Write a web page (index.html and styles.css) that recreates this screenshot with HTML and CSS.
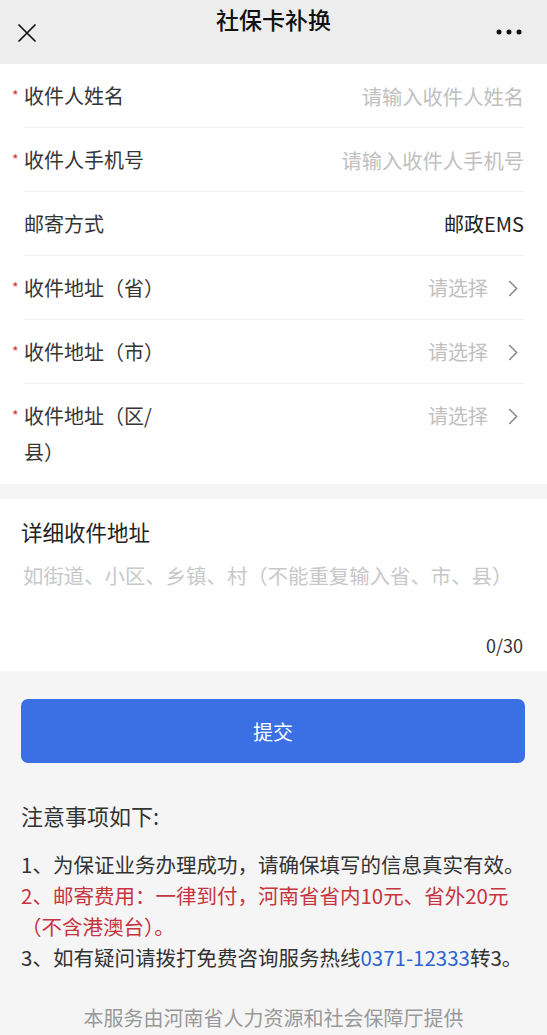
FILE: index.html
```html
<!DOCTYPE html>
<html lang="zh-CN">
<head>
    <meta charset="UTF-8">
    <meta name="viewport" content="width=device-width, initial-scale=1.0">
    <title>社保卡补换</title>
    <link rel="stylesheet" href="styles.css">
</head>
<body>
    <header class="topbar">
        <button class="topbar-btn close-btn" aria-label="关闭">
            <svg width="20" height="20" viewBox="0 0 20 20"><path d="M1.5 1.5 L18.5 18.5 M18.5 1.5 L1.5 18.5" stroke="#111" stroke-width="1.7" fill="none"/></svg>
        </button>
        <h1 class="topbar-title">社保卡补换</h1>
        <button class="topbar-btn more-btn" aria-label="更多">
            <svg width="26" height="6" viewBox="0 0 26 6"><circle cx="3" cy="3" r="2.5" fill="#111"/><circle cx="13" cy="3" r="2.5" fill="#111"/><circle cx="23" cy="3" r="2.5" fill="#111"/></svg>
        </button>
    </header>

    <section class="form-card">
        <div class="form-row">
            <label class="form-label required">收件人姓名</label>
            <input class="form-input" type="text" placeholder="请输入收件人姓名">
        </div>
        <div class="form-row">
            <label class="form-label required">收件人手机号</label>
            <input class="form-input" type="tel" placeholder="请输入收件人手机号">
        </div>
        <div class="form-row">
            <label class="form-label">邮寄方式</label>
            <span class="form-value">邮政EMS</span>
        </div>
        <div class="form-row">
            <label class="form-label required">收件地址（省）</label>
            <span class="form-select">请选择<svg class="chevron" width="10" height="17" viewBox="0 0 10 17"><path d="M1.2 1 L8.6 8.5 L1.2 16" stroke="#888" stroke-width="1.5" fill="none"/></svg></span>
        </div>
        <div class="form-row">
            <label class="form-label required">收件地址（市）</label>
            <span class="form-select">请选择<svg class="chevron" width="10" height="17" viewBox="0 0 10 17"><path d="M1.2 1 L8.6 8.5 L1.2 16" stroke="#888" stroke-width="1.5" fill="none"/></svg></span>
        </div>
        <div class="form-row">
            <label class="form-label required">收件地址（区/县）</label>
            <span class="form-select">请选择<svg class="chevron" width="10" height="17" viewBox="0 0 10 17"><path d="M1.2 1 L8.6 8.5 L1.2 16" stroke="#888" stroke-width="1.5" fill="none"/></svg></span>
        </div>
    </section>

    <section class="detail-card">
        <div class="detail-title">详细收件地址</div>
        <textarea class="detail-input" maxlength="30" placeholder="如街道、小区、乡镇、村（不能重复输入省、市、县）"></textarea>
        <div class="detail-count">0/30</div>
    </section>

    <button class="submit-btn">提交</button>

    <section class="notes">
        <h2 class="notes-title">注意事项如下:</h2>
        <p>1、为保证业务办理成功，请确保填写的信息真实有效。</p>
        <p class="notes-red">2、邮寄费用：一律到付，河南省省内10元、省外20元<br>（不含港澳台）。</p>
        <p>3、如有疑问请拨打免费咨询服务热线<a class="notes-link" href="tel:0371-12333">0371-12333</a>转3。</p>
    </section>

    <footer class="footer">本服务由河南省人力资源和社会保障厅提供</footer>
</body>
</html>
```

FILE: styles.css
```css
body {
    margin: 0;
    width: 547px;
    background-color: #f5f5f5;
    font-family: "Noto Sans CJK SC", "Noto Sans", sans-serif;
    color: #333333;
}

/* 顶部栏 */
.topbar {
    height: 64px;
    background-color: #ededed;
    display: grid;
    grid-template-columns: 80px 1fr 80px;
    align-items: start;
}

.topbar-btn {
    background: none;
    border: none;
    padding: 0;
    cursor: pointer;
}

.topbar-btn svg {
    display: block;
}

.close-btn {
    margin: 23px 0 0 17px;
    justify-self: start;
}

.more-btn {
    margin: 29px 25px 0 0;
    justify-self: end;
}

.topbar-title {
    margin: 2px 0 0;
    font-size: 23px;
    font-weight: 500;
    line-height: 34px;
    text-align: center;
    color: #111111;
}

/* 表单 */
.form-card {
    background-color: #ffffff;
}

.form-row {
    margin: 0 23px 0 24px;
    padding: 14px 0 13px;
    display: flex;
    justify-content: space-between;
    align-items: flex-start;
    border-bottom: 1px solid #f1f1f1;
    font-size: 20px;
    line-height: 36px;
}

.form-row:last-child {
    border-bottom: none;
    padding-bottom: 14px;
}

.form-label {
    position: relative;
    width: 140px;
    flex-shrink: 0;
    color: #353535;
}

.form-label.required::before {
    content: "*";
    position: absolute;
    left: -12px;
    top: -1px;
    font-size: 14px;
    color: #d9303c;
}

.form-input {
    flex: 1;
    min-width: 0;
    border: none;
    outline: none;
    padding: 0;
    background: transparent;
    text-align: right;
    font-family: inherit;
    font-size: 20.3px;
    line-height: 36px;
    height: 36px;
    color: #333333;
}

.form-input::placeholder {
    color: #c0c0c0;
}

.form-value {
    color: #222222;
}

.form-select {
    display: flex;
    align-items: center;
    color: #c0c0c0;
    margin-right: 6px;
}

.chevron {
    margin-left: 20px;
}

/* 详细地址 */
.detail-card {
    margin-top: 15px;
    background-color: #ffffff;
    padding: 15px 24px 11px 21px;
}

.detail-title {
    font-size: 21.5px;
    line-height: 36px;
    color: #222222;
}

.detail-input {
    display: block;
    width: 100%;
    height: 73px;
    margin: 7px 0 0;
    padding: 0 0 0 2px;
    box-sizing: border-box;
    border: none;
    outline: none;
    resize: none;
    font-family: inherit;
    font-size: 20.4px;
    line-height: 36px;
    color: #333333;
}

.detail-input::placeholder {
    color: #c8c8c8;
}

.detail-count {
    text-align: right;
    font-size: 18px;
    line-height: 30px;
    color: #333333;
}

/* 提交按钮 */
.submit-btn {
    display: block;
    width: 504px;
    height: 64px;
    margin: 28px 0 0 21px;
    border: none;
    border-radius: 7px;
    background-color: #3a70e3;
    color: #ffffff;
    font-family: inherit;
    font-size: 20px;
    cursor: pointer;
}

/* 注意事项 */
.notes {
    padding: 0 21px;
}

.notes-title {
    margin: 34px 0 16px;
    font-size: 22px;
    font-weight: normal;
    line-height: 36px;
    color: #333333;
}

.notes p {
    margin: 0;
    font-size: 20.5px;
    line-height: 31px;
    color: #333333;
}

.notes .notes-red {
    color: #c6343f;
}

.notes-link {
    color: #2c65d1;
    text-decoration: none;
}

.footer {
    margin-top: 30px;
    text-align: center;
    font-size: 20px;
    line-height: 30px;
    color: #999999;
}
```
